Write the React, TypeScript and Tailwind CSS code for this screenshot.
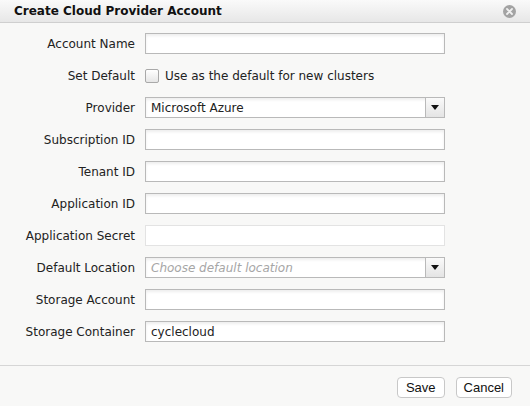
import React from "react";

const labelFont = { fontFamily: '"DejaVu Sans", Verdana, sans-serif' };

function TextInput({ value, disabled }: { value?: string; disabled?: boolean }) {
  return (
    <div
      className={`h-[21px] w-[300px] bg-white border flex items-center px-[5px] text-[12px] text-[#222] ${
        disabled ? "border-[#e3e3e3]" : "border-[#b9b9b9] shadow-[inset_0_2px_3px_rgba(0,0,0,0.07)]"
      }`}
    >
      {value}
    </div>
  );
}

function SelectInput({ value, placeholder }: { value?: string; placeholder?: string }) {
  return (
    <div className="h-[21px] w-[300px] bg-white border border-[#b9b9b9] flex shadow-[inset_0_2px_3px_rgba(0,0,0,0.07)]">
      <div className="flex-1 flex items-center px-[5px] text-[12px]">
        {value ? (
          <span className="text-[#222]">{value}</span>
        ) : (
          <span className="text-[#a6a6a6] italic">{placeholder}</span>
        )}
      </div>
      <div className="w-[19px] border-l border-[#b9b9b9] bg-gradient-to-b from-[#fafafa] to-[#e4e4e4] flex items-center justify-center">
        <svg width="8" height="5" viewBox="0 0 8 5">
          <path d="M0 0h8L4 5z" fill="#111" />
        </svg>
      </div>
    </div>
  );
}

export default function App() {
  const rows: { label: string; field: React.ReactNode }[] = [
    { label: "Account Name", field: <TextInput /> },
    {
      label: "Set Default",
      field: (
        <div className="flex items-center gap-[6px] text-[12px] text-[#222]">
          <div className="w-[14px] h-[14px] rounded-[2px] border border-[#a9a9a9] bg-gradient-to-b from-white to-[#e6e6e6]" />
          <span>Use as the default for new clusters</span>
        </div>
      ),
    },
    { label: "Provider", field: <SelectInput value="Microsoft Azure" /> },
    { label: "Subscription ID", field: <TextInput /> },
    { label: "Tenant ID", field: <TextInput /> },
    { label: "Application ID", field: <TextInput /> },
    { label: "Application Secret", field: <TextInput disabled /> },
    { label: "Default Location", field: <SelectInput placeholder="Choose default location" /> },
    { label: "Storage Account", field: <TextInput /> },
    { label: "Storage Container", field: <TextInput value="cyclecloud" /> },
  ];

  return (
    <div className="w-[530px] h-[406px] bg-[#f8f8f7] flex flex-col overflow-hidden" style={labelFont}>
      {/* Title bar */}
      <div className="h-[23px] flex items-center justify-between pl-[14px] pr-[14px] bg-gradient-to-b from-[#fafafa] to-[#e7e7e7] border-b border-[#cfcfcf]">
        <span className="text-[12px] font-bold text-[#111]">Create Cloud Provider Account</span>
        <div className="w-[13px] h-[13px] rounded-full bg-[#a3a3a3] flex items-center justify-center">
          <svg width="7" height="7" viewBox="0 0 7 7">
            <path d="M1 1l5 5M6 1L1 6" stroke="#f0f0f0" strokeWidth="1.8" strokeLinecap="round" />
          </svg>
        </div>
      </div>

      {/* Form */}
      <div className="flex flex-col gap-[11px] pt-[10px] h-[343px] border-b border-[#d6d6d6]">
        {rows.map((r) => (
          <div key={r.label} className="flex items-center h-[21px]">
            <div className="w-[135px] text-right text-[12px] text-[#222]">{r.label}</div>
            <div className="ml-[10px]">{r.field}</div>
          </div>
        ))}
      </div>

      {/* Footer */}
      <div className="flex justify-end gap-[11px] pt-[11px] pr-[18px]" style={{ fontFamily: '"Liberation Sans", Arial, sans-serif' }}>
        <button className="h-[21px] px-[8px] bg-white border border-[#c8c8c8] rounded-[4px] text-[13px] text-[#111] leading-none">
          Save
        </button>
        <button className="h-[21px] px-[7px] bg-white border border-[#c8c8c8] rounded-[4px] text-[13px] text-[#111] leading-none">
          Cancel
        </button>
      </div>
    </div>
  );
}
